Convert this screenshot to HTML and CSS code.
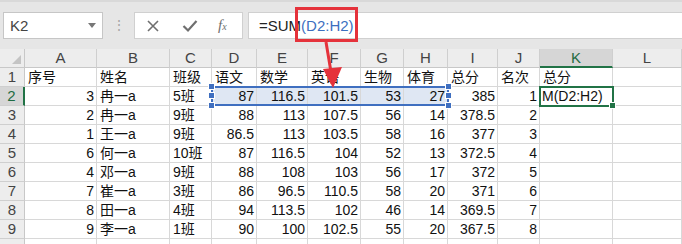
FILE: index.html
```html
<!DOCTYPE html>
<html>
<head>
    <meta charset="UTF-8">
    <title>成绩表</title>
    <link rel="stylesheet" href="styles.css">
</head>
<body>
    <div class="app">
        <div class="formula-bar">
            <div class="name-box">
                <span>K2</span>
                <span class="caret"></span>
            </div>
            <div class="grip">⋮</div>
            <div class="fx-tools">
                <svg class="tool" width="14" height="14" viewBox="0 0 14 14">
                    <path d="M2 2 L12 12 M12 2 L2 12" stroke="#6f6f6f" stroke-width="1.6" fill="none"/>
                </svg>
                <svg class="tool" width="16" height="14" viewBox="0 0 16 14">
                    <path d="M1.5 7 L6 11.5 L14.5 2" stroke="#6f6f6f" stroke-width="2.2" fill="none"/>
                </svg>
                <span class="fx">f<sub>x</sub></span>
            </div>
            <div class="formula-input">
                <span>=SUM</span><span class="ref">(D2:H2)</span>
            </div>
        </div>

        <div class="sheet">
            <div class="grid" id="grid"></div>
            <div class="ref-range">
                <span class="handle tl"></span>
                <span class="handle ml"></span>
                <span class="handle bl"></span>
                <span class="handle tr"></span>
                <span class="handle mr"></span>
                <span class="handle br"></span>
            </div>
            <div class="active-cell"><span class="edit-text">M(D2:H2)</span><span class="fill-handle"></span></div>
        </div>

        <div class="callout"></div>
        <svg class="arrow" width="682" height="244" viewBox="0 0 682 244">
            <line x1="326" y1="42" x2="331" y2="72" stroke="#e5323b" stroke-width="3"/>
            <polygon points="323,69 342,67 333,88" fill="#e5323b"/>
        </svg>
    </div>

    <script>
        const letters = ['A', 'B', 'C', 'D', 'E', 'F', 'G', 'H', 'I', 'J', 'K', 'L'];
        const headers = ['序号', '姓名', '班级', '语文', '数学', '英语', '生物', '体育', '总分', '名次', '总分', ''];
        const rows = [
            [3, '冉一a', '5班', 87, 116.5, 101.5, 53, 27, 385, 1],
            [2, '冉一a', '9班', 88, 113, 107.5, 56, 14, 378.5, 2],
            [1, '王一a', '9班', 86.5, 113, 103.5, 58, 16, 377, 3],
            [6, '何一a', '10班', 87, 116.5, 104, 52, 13, 372.5, 4],
            [4, '邓一a', '9班', 88, 108, 103, 56, 17, 372, 5],
            [7, '崔一a', '3班', 86, 96.5, 110.5, 58, 20, 371, 6],
            [8, '田一a', '4班', 94, 113.5, 102, 46, 14, 369.5, 7],
            [9, '李一a', '1班', 90, 100, 102.5, 55, 20, 367.5, 8]
        ];

        const grid = document.getElementById('grid');

        function addCell(text, cls) {
            const cell = document.createElement('div');
            cell.className = 'cell ' + cls;
            cell.textContent = text;
            grid.appendChild(cell);
        }

        addCell('', 'corner');
        letters.forEach(letter => {
            addCell(letter, letter === 'K' ? 'col-head selected' : 'col-head');
        });

        addCell('1', 'row-head');
        headers.forEach(h => addCell(h, 'text'));

        rows.forEach((row, i) => {
            const rowNum = i + 2;
            addCell(rowNum, rowNum === 2 ? 'row-head selected' : 'row-head');
            letters.forEach((letter, c) => {
                const value = row[c] === undefined ? '' : row[c];
                let cls = typeof value === 'number' ? 'num' : 'text';
                if (rowNum === 2 && c >= 3 && c <= 7) cls += ' in-ref';
                addCell(value, cls);
            });
        });

        // row 10 is only a sliver at the bottom edge
        addCell('', 'row-head');
        letters.forEach(() => addCell('', 'text'));
    </script>
</body>
</html>
```

FILE: styles.css
```css
body {
    margin: 0;
    background: #ffffff;
    font-family: 'Liberation Sans', 'Noto Sans CJK SC', sans-serif;
}

.app {
    position: relative;
    width: 682px;
    height: 244px;
    overflow: hidden;
}

.formula-bar {
    height: 49px;
    box-sizing: border-box;
    background: #e6e6e6;
    border-top: 2px solid #d9d9d9;
    padding-top: 10px;
    display: flex;
    align-items: flex-start;
}

.name-box {
    margin-left: 3px;
    width: 100px;
    height: 27px;
    box-sizing: border-box;
    background: #ffffff;
    border: 1px solid #c6c6c6;
    display: flex;
    align-items: center;
    justify-content: space-between;
    padding: 0 6px 0 6px;
    font-size: 15px;
    color: #444444;
}

.caret {
    width: 0;
    height: 0;
    border-left: 4px solid transparent;
    border-right: 4px solid transparent;
    border-top: 5px solid #777777;
}

.grip {
    width: 31px;
    text-align: center;
    line-height: 27px;
    color: #a8a8a8;
    font-size: 14px;
}

.fx-tools {
    width: 109px;
    height: 27px;
    box-sizing: border-box;
    background: #ffffff;
    border: 1px solid #d0d0d0;
    display: flex;
    align-items: center;
    padding-left: 11px;
    gap: 22px;
}

.fx {
    font-family: 'Liberation Serif', serif;
    font-style: italic;
    font-size: 15px;
    color: #6f6f6f;
    margin-left: -2px;
}

.fx sub {
    font-size: 10px;
    vertical-align: 0;
}

.formula-input {
    margin-left: 5px;
    flex: 1;
    height: 27px;
    box-sizing: border-box;
    background: #ffffff;
    border: 1px solid #d0d0d0;
    border-right: none;
    padding-left: 10px;
    line-height: 25px;
    font-size: 15px;
    color: #222222;
}

.formula-input .ref {
    color: #3c6fbf;
}

.sheet {
    position: relative;
}

.grid {
    display: grid;
    grid-template-columns: 25px 72px 73px 42px 45px 51px 53px 43px 44px 50px 42px 73px 69px;
    grid-auto-rows: 19px;
}

.cell {
    box-sizing: border-box;
    border-right: 1px solid #d8d8d8;
    border-bottom: 1px solid #d8d8d8;
    font-size: 14px;
    line-height: 18px;
    color: #111111;
    white-space: nowrap;
    overflow: hidden;
}

.text {
    padding-left: 3px;
}

.num {
    text-align: right;
    padding-right: 2px;
}

.in-ref {
    background: #dfe7f3;
}

.corner {
    background: #ededed;
    border-right: 1px solid #c8c8c8;
    border-bottom: 1px solid #c8c8c8;
    position: relative;
}

.corner::after {
    content: '';
    position: absolute;
    right: 3px;
    bottom: 3px;
    border-left: 9px solid transparent;
    border-bottom: 9px solid #c4c4c4;
}

.col-head {
    background: #ededed;
    text-align: center;
    color: #444444;
    font-size: 15px;
    border-right: 1px solid #cfcfcf;
    border-bottom: 1px solid #c8c8c8;
}

.row-head {
    background: #ededed;
    text-align: center;
    color: #444444;
    font-size: 15px;
    border-right: 1px solid #c8c8c8;
    border-bottom: 1px solid #cfcfcf;
}

.col-head.selected {
    background: #d6d6d6;
    color: #1e6b42;
    border-bottom: 2px solid #217346;
}

.row-head.selected {
    background: #d6d6d6;
    color: #1e6b42;
    border-right: 2px solid #217346;
}

.ref-range {
    position: absolute;
    left: 211px;
    top: 37px;
    width: 238px;
    height: 20px;
    box-sizing: border-box;
    border: 2px solid #3f6fc0;
}

.handle {
    position: absolute;
    width: 5px;
    height: 5px;
    background: #3f6fc0;
    border: 1px solid #ffffff;
}

.handle.tl { left: -5px; top: -5px; }
.handle.ml { left: -5px; top: 4px; }
.handle.bl { left: -5px; bottom: -5px; }
.handle.tr { right: -5px; top: -5px; }
.handle.mr { right: -5px; top: 4px; }
.handle.br { right: -5px; bottom: -5px; }

.active-cell {
    position: absolute;
    left: 539px;
    top: 37px;
    width: 75px;
    height: 21px;
    box-sizing: border-box;
    border: 2px solid #217346;
    background: #ffffff;
    font-size: 14px;
    line-height: 17px;
    color: #111111;
}

.edit-text {
    display: block;
    white-space: nowrap;
    padding-left: 1px;
}

.fill-handle {
    position: absolute;
    right: -4px;
    bottom: -4px;
    width: 5px;
    height: 5px;
    background: #217346;
    border: 1px solid #ffffff;
}

.callout {
    position: absolute;
    left: 295px;
    top: 7px;
    width: 63px;
    height: 35px;
    box-sizing: border-box;
    border: 3px solid #e5323b;
}

.arrow {
    position: absolute;
    left: 0;
    top: 0;
    pointer-events: none;
}
```
